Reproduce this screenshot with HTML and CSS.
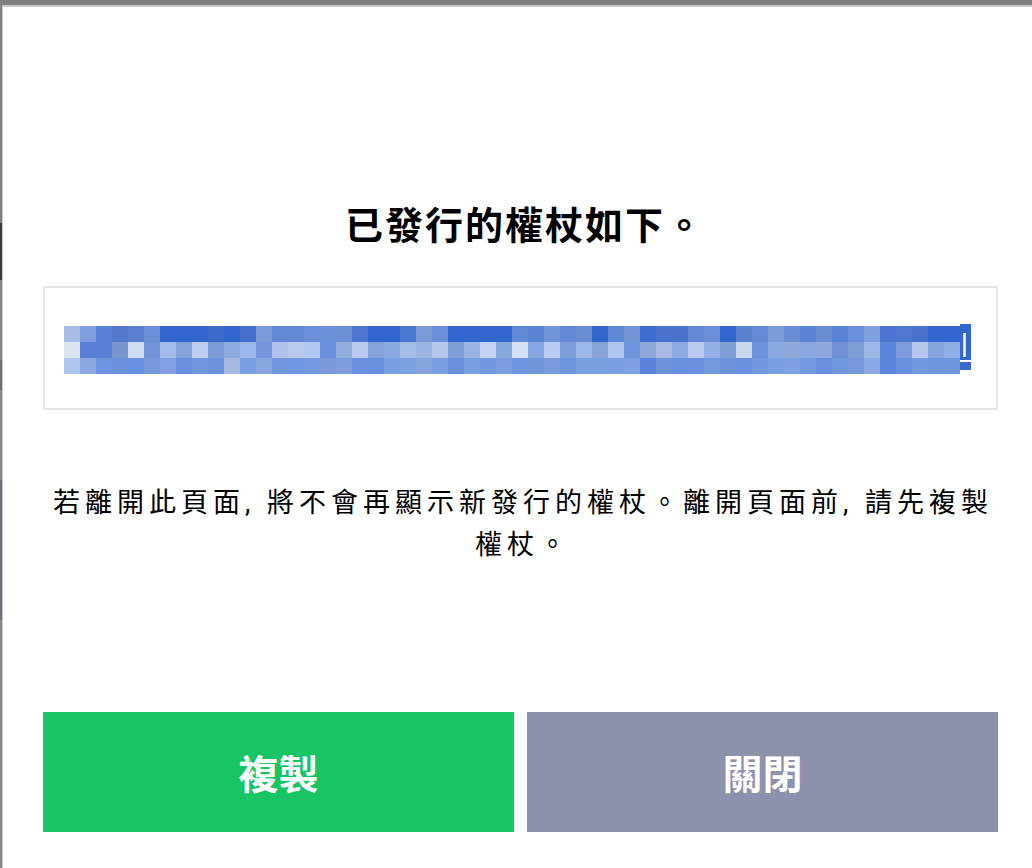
FILE: index.html
```html
<!DOCTYPE html>
<html lang="zh-Hant">
<head>
    <meta charset="UTF-8">
    <meta name="viewport" content="width=device-width, initial-scale=1.0">
    <title>已發行的權杖</title>
    <link rel="stylesheet" href="styles.css">
</head>
<body>
    <div class="modal">
        <h2 class="modal-title">已發行的權杖如下。</h2>

        <div class="token-box">
            <div class="token-mosaic" id="tokenMosaic"></div>
            <svg class="token-end" width="11" height="50" viewBox="0 0 11 50">
                <rect x="0" y="0" width="11" height="36" fill="#3366cc"/>
                <rect x="3.3" y="9" width="2.4" height="24" fill="#ffffff"/>
                <rect x="0" y="38" width="11" height="8" fill="#3a6ad0"/>
            </svg>
        </div>

        <p class="notice">若離開此頁面, 將不會再顯示新發行的權杖。離開頁面前, 請先複製權杖。</p>

        <div class="modal-buttons">
            <button type="button" class="modal-btn copy-btn">複製</button>
            <button type="button" class="modal-btn close-btn">關閉</button>
        </div>
    </div>

    <script>
        // token is shown blurred, so draw it as a mosaic of 16px cells
        const mosaicRows = [
            ['#a8bce6','#7f9fe0','#5a80d6','#5578cc','#5a7ed0','#6c8fd8','#3366cc','#3366cc','#3366cc','#3d6acb','#3366cc','#4470cc','#7b9ad8','#6389d6','#6389d6','#6a8fda','#6c90da','#6d8fd6','#5077d0',
             '#3366cc','#3366cc','#4a78d0','#7c9ad4','#6a8fd6','#3366cc','#3366cc','#3366cc','#3366cc','#6089d6','#5a82d2','#7296d8','#6288d6','#6a8ed4','#3366cc','#6088d6','#7394d4','#3e6ccc','#4a74cc',
             '#4a74cc','#6288d6','#6a8fd8','#3366cc','#5a80d0','#6489d6','#7b9cd8','#6a8ed6','#5c84d6','#6a8ed4','#5a82d4','#6a8edc','#7fa0dc','#4a74d0','#5078d0','#4a72cc','#3366cc','#3366cc'],
            ['#dde3ef','#5880d6','#5880d6','#7894cc','#d0dcf0','#7394d8','#a3bbe8','#86a2da','#bccdef','#7b9ad8','#8faade','#9cb8ec','#7596dc','#b0c3ed','#b8c9ed','#b0c8f0','#6c90e0','#94addf','#b8c8ee',
             '#86a2d8','#8aa8e2','#a3bce8','#9cb4e4','#b4c8ee','#7f9ed8','#9ab4e6','#c4d4f2','#88a6de','#d4e0f4','#86a6e4','#b8ccf4','#7c9ddc','#9bb6e8','#86a2d8','#b0c6ee','#6e94dc','#90a8d8','#a8bae2',
             '#8eaae2','#b8caee','#94b0e6','#809ed8','#cad8ee','#6e92dc','#8aa8e2','#8ea8dc','#8ca8e0','#8ea8dc','#7090d8','#7e9cd8','#9cb6e6','#5a86dc','#7d9cdc','#b4c6ec','#86a4e0','#8faee6'],
            ['#b0c6f0','#8aa7e2','#6d94e0','#6e90dc','#6890e0','#7898dc','#82a0e2','#6a8edc','#7496e0','#6e93de','#a6b9e2','#7c9ee2','#88a6e0','#7496de','#7196e2','#7399e2','#7a99dc','#7c9cdc','#6c90de',
             '#6990dc','#7a9ee2','#7ca0e2','#86a4de','#7a9ee2','#6a8fda','#7a9ee0','#7298e0','#7c9edf','#6e96e0','#7096dc','#7a9cdd','#6e96de','#7c9fe0','#7c9fe2','#7a9ee2','#7ea0e0','#5a84dc','#6f92dc',
             '#6990dc','#6a90de','#7698de','#6e92dc','#6a90de','#7298e0','#7a9ce0','#7ea0e2','#7598e0','#6a8edc','#7098e0','#7899de','#8aa8e2','#5a86dc','#6890de','#7298e0','#7096de','#7096de']
        ];

        const mosaic = document.getElementById('tokenMosaic');
        mosaicRows.forEach(row => {
            row.forEach(color => {
                const cell = document.createElement('span');
                cell.className = 'mosaic-cell';
                cell.style.background = color;
                mosaic.appendChild(cell);
            });
        });
    </script>
</body>
</html>
```

FILE: styles.css
```css
html, body {
    height: 100%;
}
body {
    margin: 0;
    overflow: hidden;
    font-family: Roboto, "Noto Sans CJK TC", sans-serif;
    color: #111;
    background: linear-gradient(to bottom,
        #808080 0 223px,
        #3a3a3a 223px 280px,
        #858585 280px 360px,
        #6e6e6e 360px 390px,
        #888888 390px 480px,
        #6c707c 480px 620px,
        #888888 620px);
}
.modal {
    box-sizing: border-box;
    width: 1040px;
    height: 863px;
    margin: 5px 0 0 2px;
    padding: 196px 0 0 40px;
    background: white;
    border-top: 2px solid #c8c8c8;
    border-left: 1px solid #c8c8c8;
}
.modal-title {
    box-sizing: border-box;
    width: 955px;
    margin: 0;
    padding-left: 9px;
    font-size: 38px;
    line-height: 46px;
    font-weight: 700;
    letter-spacing: 2px;
    text-align: center;
    color: #000;
}
.token-box {
    box-sizing: border-box;
    width: 955px;
    height: 124px;
    margin-top: 37px;
    padding: 38px 19px 0;
    border: 2px solid #e6e6e6;
    display: flex;
    align-items: flex-start;
}
.token-mosaic {
    display: grid;
    grid-template-columns: repeat(56, 16px);
    grid-auto-rows: 16px;
}
.mosaic-cell {
    display: block;
}
.token-end {
    display: block;
    margin-top: -2px;
}
.notice {
    box-sizing: border-box;
    width: 955px;
    margin: 72px 0 0;
    padding-left: 5px;
    font-size: 27px;
    line-height: 42px;
    letter-spacing: 5px;
    text-align: center;
    color: #000;
}
.modal-buttons {
    width: 955px;
    margin-top: 146px;
    display: flex;
    gap: 13px;
}
.modal-btn {
    flex: 1;
    height: 120px;
    border: none;
    border-radius: 0;
    padding: 0;
    font-family: Roboto, "Noto Sans CJK TC", sans-serif;
    font-size: 40px;
    font-weight: 700;
    color: white;
    cursor: pointer;
}
.copy-btn {
    background: #19c464;
}
.close-btn {
    background: #8e91ab;
}
```
